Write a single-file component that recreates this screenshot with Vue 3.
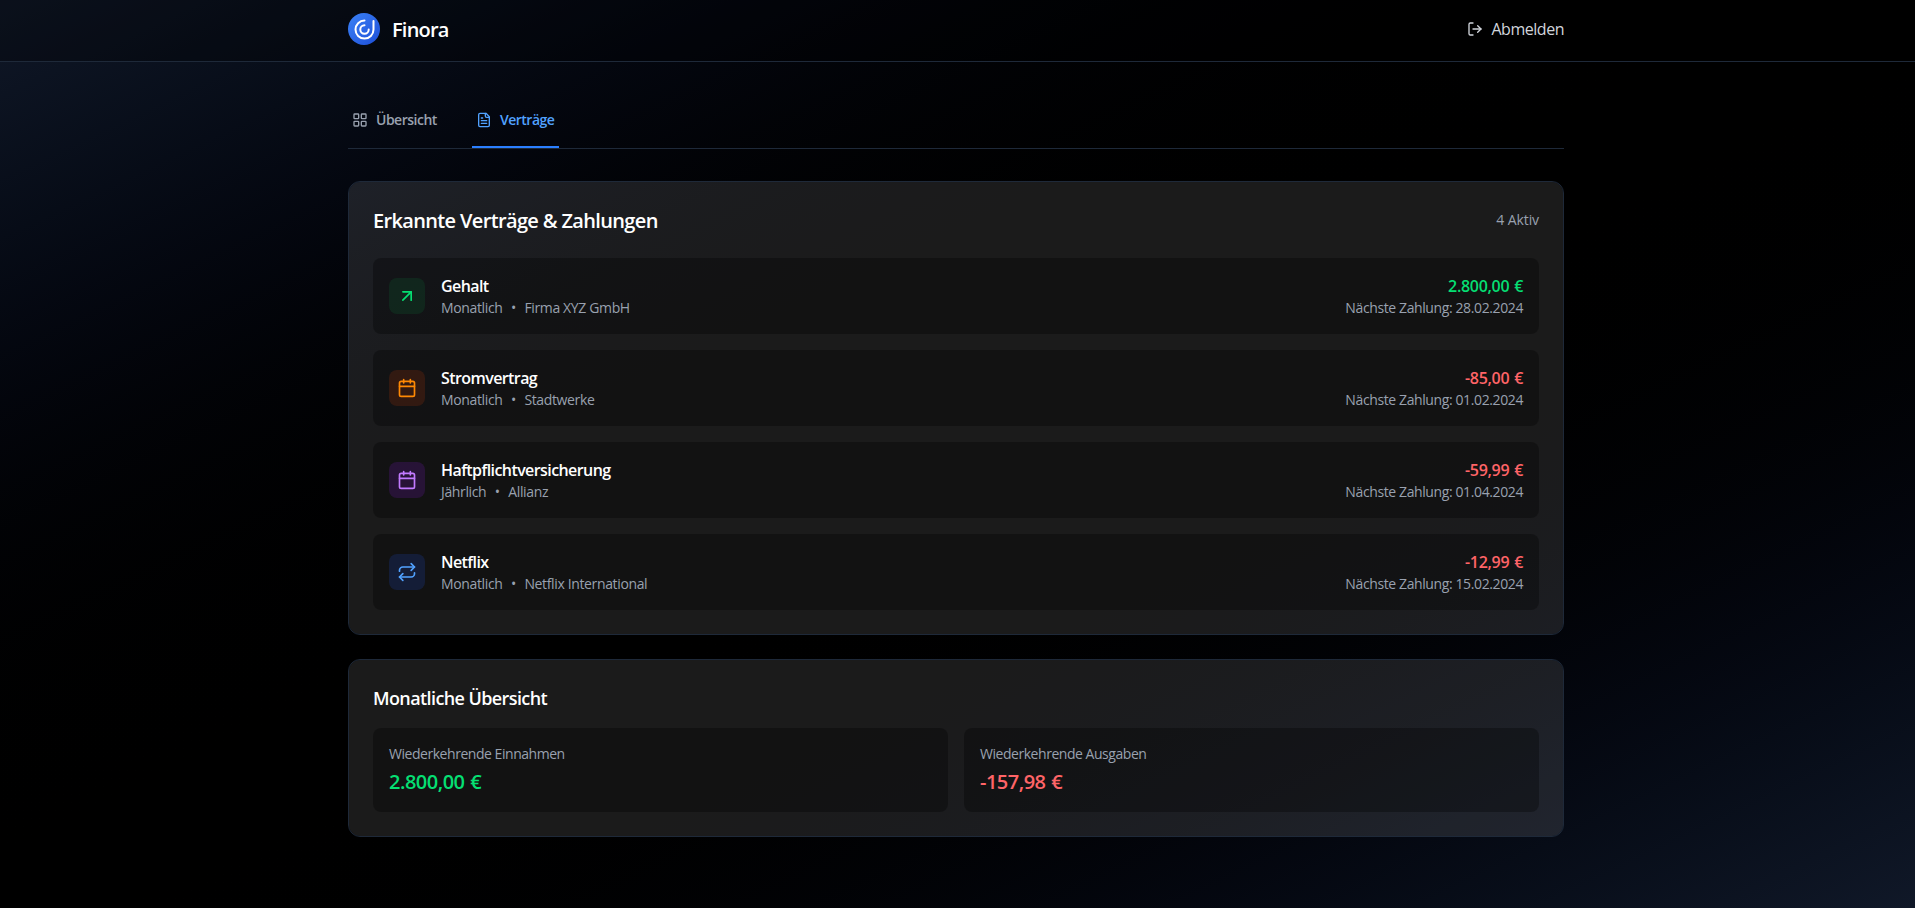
<script setup>
const contracts = [
  { name: 'Gehalt', cycle: 'Monatlich', partner: 'Firma XYZ GmbH', amount: '2.800,00 €', next: '28.02.2024', tone: 'green', icon: 'arrow', positive: true },
  { name: 'Stromvertrag', cycle: 'Monatlich', partner: 'Stadtwerke', amount: '-85,00 €', next: '01.02.2024', tone: 'orange', icon: 'calendar' },
  { name: 'Haftpflichtversicherung', cycle: 'Jährlich', partner: 'Allianz', amount: '-59,99 €', next: '01.04.2024', tone: 'purple', icon: 'calendar' },
  { name: 'Netflix', cycle: 'Monatlich', partner: 'Netflix International', amount: '-12,99 €', next: '15.02.2024', tone: 'blue', icon: 'repeat' },
]
const icons = {
  arrow: ['M7 7h10v10', 'M7 17 17 7'],
  calendar: ['M8 2v4', 'M16 2v4', 'M5 4h14a2 2 0 0 1 2 2v14a2 2 0 0 1-2 2H5a2 2 0 0 1-2-2V6a2 2 0 0 1 2-2z', 'M3 10h18'],
  repeat: ['m17 2 4 4-4 4', 'M3 11v-1a4 4 0 0 1 4-4h14', 'm7 22-4-4 4-4', 'M21 13v1a4 4 0 0 1-4 4H3'],
}
</script>

<template>
  <div class="page">
    <header class="header">
      <div class="container header-inner">
        <div class="brand">
          <svg class="logo" viewBox="0 0 32 32" fill="none">
            <defs>
              <linearGradient id="logoFill" x1="0" y1="0" x2="1" y2="1">
                <stop offset="0" stop-color="#3b82f6" />
                <stop offset="1" stop-color="#1d4ed8" />
              </linearGradient>
            </defs>
            <circle cx="16" cy="16" r="16" fill="url(#logoFill)" />
            <g stroke="#fff" stroke-width="2" stroke-linecap="round">
              <path d="M16.5 7.6a9 9 0 1 0 9 9V8" />
              <path d="M16.5 12.3a4.2 4.2 0 1 0 4.2 4.2" />
            </g>
          </svg>
          <span class="brand-name">Finora</span>
        </div>
        <button class="logout">
          <svg class="icon-sm" viewBox="0 0 24 24"><path d="M9 21H5a2 2 0 0 1-2-2V5a2 2 0 0 1 2-2h4" /><path d="m16 17 5-5-5-5" /><path d="M21 12H9" /></svg>
          <span>Abmelden</span>
        </button>
      </div>
    </header>

    <main class="container main">
      <nav class="tabs">
        <button class="tab tab-overview">
          <svg class="icon-sm" viewBox="0 0 24 24"><rect x="3" y="3" width="7" height="7" rx="1" /><rect x="14" y="3" width="7" height="7" rx="1" /><rect x="14" y="14" width="7" height="7" rx="1" /><rect x="3" y="14" width="7" height="7" rx="1" /></svg>
          <span>Übersicht</span>
        </button>
        <button class="tab tab-contracts active">
          <svg class="icon-sm" viewBox="0 0 24 24"><path d="M15 2H6a2 2 0 0 0-2 2v16a2 2 0 0 0 2 2h12a2 2 0 0 0 2-2V7Z" /><path d="M14 2v4a2 2 0 0 0 2 2h4" /><path d="M10 9H8" /><path d="M16 13H8" /><path d="M16 17H8" /></svg>
          <span>Verträge</span>
        </button>
      </nav>

      <section class="card">
        <div class="card-head">
          <h2 class="title-lg">Erkannte Verträge &amp; Zahlungen</h2>
          <span class="muted count">4 Aktiv</span>
        </div>
        <div class="list">
          <div v-for="c in contracts" :key="c.name" class="row">
            <div class="row-left">
              <div class="badge" :class="c.tone">
                <svg class="icon-md" viewBox="0 0 24 24"><path v-for="d in icons[c.icon]" :key="d" :d="d" /></svg>
              </div>
              <div>
                <h3 class="name">{{ c.name }}</h3>
                <div class="muted meta"><span>{{ c.cycle }}</span><span>•</span><span>{{ c.partner }}</span></div>
              </div>
            </div>
            <div class="row-right">
              <div class="amount" :class="c.positive ? 'pos' : 'neg'">{{ c.amount }}</div>
              <div class="muted next">Nächste Zahlung: {{ c.next }}</div>
            </div>
          </div>
        </div>
      </section>

      <section class="card">
        <h2 class="title-md">Monatliche Übersicht</h2>
        <div class="stats">
          <div class="stat">
            <div class="muted stat-label">Wiederkehrende Einnahmen</div>
            <div class="total pos">2.800,00 €</div>
          </div>
          <div class="stat">
            <div class="muted stat-label">Wiederkehrende Ausgaben</div>
            <div class="total neg">-157,98 €</div>
          </div>
        </div>
      </section>
    </main>
  </div>
</template>

<style>
html, body { background: #000; }
body { margin: 0; }
</style>

<style scoped>
.page {
  box-sizing: border-box;
  height: 908px;
  overflow: hidden;
  background: linear-gradient(to bottom right in oklab, #101828 0%, #000 50%, #101828 100%);
  font-family: "Segoe UI", "Open Sans", "Noto Sans", sans-serif;
  font-size: 16px;
  line-height: 24px;
  color: #fff;
}
.container { width: 1216px; margin-left: 348px; }
.header {
  box-sizing: border-box;
  height: 62px;
  background: rgba(0, 0, 0, 0.3);
  border-bottom: 1px solid #1e2939;
}
.header-inner { height: 58px; display: flex; align-items: center; justify-content: space-between; }
.brand { display: flex; align-items: center; gap: 12px; }
.logo { width: 32px; height: 32px; display: block; }
.brand-name { font-size: 20px; line-height: 28px; font-weight: 600; letter-spacing: -0.8px; padding-top: 2px; }
button { border: 0; background: none; padding: 0; font: inherit; color: inherit; }
.logout { display: flex; align-items: center; gap: 8px; color: #d1d5dc; letter-spacing: -0.47px; }
svg { display: block; }
.icon-sm, .icon-md { fill: none; stroke: currentColor; stroke-width: 2; stroke-linecap: round; stroke-linejoin: round; flex: none; }
.icon-sm { width: 16px; height: 16px; }
.icon-md { width: 20px; height: 20px; }
.main { padding-top: 32px; }
.tabs { display: flex; gap: 32px; border-bottom: 1px solid #1e2939; margin-bottom: 32px; }
.tab {
  box-sizing: border-box;
  display: flex;
  align-items: center;
  gap: 8px;
  height: 54px;
  padding: 0 4px;
  border-bottom: 2px solid transparent;
  font-size: 14px;
  line-height: 20px;
  font-weight: 600;
  letter-spacing: -0.5px;
  color: #99a1af;
  white-space: nowrap;
}
.tab-overview { width: 92px; }
.tab-contracts { width: 87px; }
.tab.active { color: #51a2ff; border-color: #2b7fff; }
.card {
  padding: 24px;
  border: 1px solid #1e2939;
  border-radius: 12px;
  background: rgba(255, 255, 255, 0.105);
  background-clip: padding-box;
  margin-bottom: 24px;
}
.card-head { display: flex; justify-content: space-between; align-items: center; margin-bottom: 24px; }
h2, h3 { margin: 0; font-weight: 600; }
.title-lg { font-size: 20px; line-height: 26px; padding-top: 2px; letter-spacing: -0.65px; }
.title-md { font-size: 18px; line-height: 28px; letter-spacing: -0.6px; margin-bottom: 16px; }
.muted { font-size: 14px; line-height: 20px; color: #99a1af; letter-spacing: -0.36px; }
.count { letter-spacing: -0.1px; }
.next { letter-spacing: -0.39px; }
.stat-label { letter-spacing: -0.46px; }
.list { display: grid; gap: 16px; }
.row {
  display: flex;
  justify-content: space-between;
  align-items: center;
  padding: 16px;
  border-radius: 8px;
  background: rgba(0, 0, 0, 0.3);
}
.row-left { display: flex; align-items: center; gap: 16px; }
.badge { padding: 8px; border-radius: 8px; }
.green { background: rgba(13, 84, 43, 0.3); color: #05df72; }
.orange { background: rgba(126, 42, 12, 0.3); color: #ff8904; }
.purple { background: rgba(89, 22, 139, 0.3); color: #c27aff; }
.blue { background: rgba(28, 57, 142, 0.3); color: #51a2ff; }
.name { font-size: 16px; line-height: 24px; letter-spacing: -0.58px; }
.meta { display: flex; gap: 8.5px; }
.row-right { text-align: right; }
.amount { font-weight: 600; letter-spacing: -0.3px; word-spacing: 1px; }
.pos { color: #05df72; }
.neg { color: #ff6467; }
.stats { display: grid; grid-template-columns: 1fr 1fr; gap: 16px; }
.stat { padding: 16px; border-radius: 8px; background: rgba(0, 0, 0, 0.3); }
.total { margin-top: 4px; font-size: 20px; line-height: 28px; font-weight: 600; letter-spacing: -0.5px; word-spacing: 1px; }
</style>
